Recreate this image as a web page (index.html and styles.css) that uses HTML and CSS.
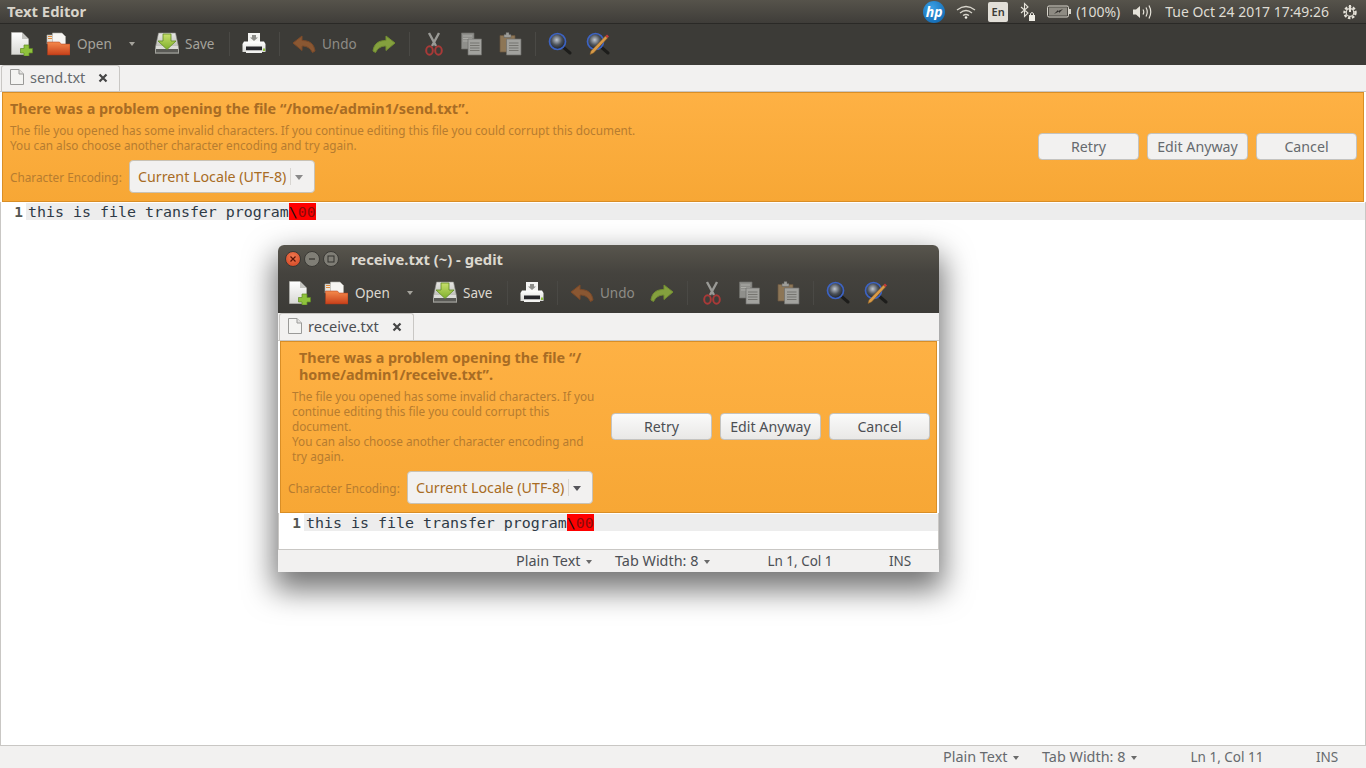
FILE: index.html
```html
<!DOCTYPE html>
<html lang="en">
<head>
<meta charset="utf-8">
<title>Text Editor</title>
<link rel="stylesheet" href="styles.css">
</head>
<body>
<svg class="defs" aria-hidden="true">
  <defs>
    <linearGradient id="g-page" x1="0" y1="0" x2="0" y2="1"><stop offset="0" stop-color="#ffffff"/><stop offset="1" stop-color="#d8d8d4"/></linearGradient>
    <linearGradient id="g-folder" x1="0" y1="0" x2="0" y2="1"><stop offset="0" stop-color="#f58a4c"/><stop offset="1" stop-color="#c8401a"/></linearGradient>
    <linearGradient id="g-drive" x1="0" y1="0" x2="0" y2="1"><stop offset="0" stop-color="#e8e8e4"/><stop offset="1" stop-color="#a8a8a2"/></linearGradient>
    <linearGradient id="g-green" x1="0" y1="0" x2="0" y2="1"><stop offset="0" stop-color="#c8e06c"/><stop offset="1" stop-color="#7fb02c"/></linearGradient>
    <radialGradient id="g-glass" cx=".45" cy=".4" r=".6"><stop offset="0" stop-color="#c0c6ce"/><stop offset=".55" stop-color="#4a5058"/><stop offset="1" stop-color="#1c2028"/></radialGradient>
    <symbol id="i-new" viewBox="0 0 24 24">
      <path d="M2.5 .5H13L19.5 7V22.5H2.5Z" fill="url(#g-page)" stroke="#b8b8b4" stroke-width=".6"/>
      <path d="M13 .5V7H19.5Z" fill="#c4c4c0"/>
      <path d="M15 13H20V16.5H23.5V21H20V24H15V21H11.5V16.5H15Z" fill="#8fc23c" stroke="#5f8a22" stroke-width=".7"/>
    </symbol>
    <symbol id="i-open" viewBox="0 0 24 24">
      <path d="M1 3H12V12H1Z" fill="#e8e6e0" stroke="#b0aea8" stroke-width=".6"/>
      <path d="M6.5 1H16L19.5 4.500V14H6.500Z" fill="#f6f5f2" stroke="#b0aea8" stroke-width=".6"/>
      <path d="M2 4.500H6M2 6.500H6" stroke="#e08a3a" stroke-width="1"/>
      <path d="M1.500 10H13.500L15 12H24V23H1.500Z" fill="url(#g-folder)" stroke="#a8381a" stroke-width=".5"/>
    </symbol>
    <symbol id="i-save" viewBox="0 0 24 24">
      <path d="M3.500 1H20.500L24 17V21.500H0V17Z" fill="url(#g-drive)" stroke="#8a8a84" stroke-width=".6"/>
      <path d="M1 16H23V20.500H1Z" fill="#5a5a56"/>
      <path d="M1 14H23V17H1Z" fill="#dcdcd8"/>
      <path d="M8 2H16V9H21L12 17.500L3 9H8Z" fill="url(#g-green)" stroke="#5f8a22" stroke-width=".8"/>
    </symbol>
    <symbol id="i-print" viewBox="0 0 24 24">
      <path d="M6 1H18V10H6Z" fill="#f4f4f2"/>
      <path d="M10 3H14V5.500H16L12 9L8 5.500H10Z" fill="#8e8e8a"/>
      <path d="M2 9.500H22L23.500 12V20H.5V12Z" fill="url(#g-page)"/>
      <path d="M4 14.500H20V18.500H4Z" fill="#26262a"/>
      <path d="M4 18.500H20V21H4Z" fill="#f2f2f0"/>
      <path d="M21 16.500H23V19H21Z" fill="#8fc23c"/>
    </symbol>
    <symbol id="i-undo" viewBox="0 0 24 24">
      <path d="M10 4L1 11L10 18.500V14C15 14 18 16 20.500 20.500L23 19C22 12 18 8.500 10 8.500Z" fill="#8a5732" stroke="#7c4a28" stroke-width="1" stroke-linejoin="round"/>
    </symbol>
    <symbol id="i-redo" viewBox="0 0 24 24">
      <path d="M14 4L23 11L14 18.500V14C9 14 6 16 3.500 20.500L1 19C2 12 6 8.500 14 8.500Z" fill="#84a03e" stroke="#728e30" stroke-width="1" stroke-linejoin="round"/>
    </symbol>
    <symbol id="i-cut" viewBox="0 0 24 24">
      <path d="M7 1L14 14M17 1L10 14" stroke="#9a9a96" stroke-width="2.400" fill="none"/>
      <ellipse cx="7.500" cy="18.500" rx="3.300" ry="4.200" fill="none" stroke="#a83a38" stroke-width="2"/>
      <ellipse cx="16.500" cy="18.500" rx="3.300" ry="4.200" fill="none" stroke="#a83a38" stroke-width="2"/>
    </symbol>
    <symbol id="i-copy" viewBox="0 0 24 24">
      <path d="M2.500 1H15V17H2.500Z" fill="#8f8f8b" stroke="#6e6e6a" stroke-width=".7"/>
      <path d="M4 4H13M4 6.500H13M4 9H13" stroke="#b0b0ac" stroke-width=".9"/>
      <path d="M9 7H22.500V23H9Z" fill="#a2a29e" stroke="#6e6e6a" stroke-width=".7"/>
      <path d="M11 11H20.500M11 13.500H20.500M11 16H20.500M11 18.500H20.500" stroke="#706f6b" stroke-width=".9"/>
    </symbol>
    <symbol id="i-paste" viewBox="0 0 24 24">
      <path d="M2 3.500H17V20H2Z" fill="#8d7656" stroke="#6a5840" stroke-width=".7"/>
      <path d="M6 2.500H8V.5H11V2.500H13V5.500H6Z" fill="#9d9d99" stroke="#5f5f5b" stroke-width=".5"/>
      <path d="M8.500 7H23V23H8.500Z" fill="#a2a29e" stroke="#6e6e6a" stroke-width=".7"/>
      <path d="M11 11H20.500M11 13.500H20.500M11 16H20.500M11 18.500H20.500" stroke="#706f6b" stroke-width=".9"/>
    </symbol>
    <symbol id="i-find" viewBox="0 0 24 24">
      <path d="M15 15L22 21" stroke="#1d1d1b" stroke-width="3" stroke-linecap="round"/>
      <circle cx="9.500" cy="9.500" r="8" fill="url(#g-glass)" stroke="#3d63c2" stroke-width="1.700"/>
    </symbol>
    <symbol id="i-replace" viewBox="0 0 24 24">
      <path d="M15 15L22 21" stroke="#1d1d1b" stroke-width="3" stroke-linecap="round"/>
      <circle cx="9.500" cy="9.500" r="8" fill="url(#g-glass)" stroke="#3d63c2" stroke-width="1.700"/>
      <path d="M19.500 4L21.500 6L7.500 21L4 22.500L5 19Z" fill="#d89a48" stroke="#8a5e24" stroke-width=".5"/>
      <path d="M19.500 4L21 2.500L23 4.500L21.500 6Z" fill="#c83a38"/>
    </symbol>
    <symbol id="i-doc" viewBox="0 0 16 16">
      <path d="M1.500 .5H10L14.500 5V15.500H1.500Z" fill="#f4f4f2" stroke="#9a9a98"/>
      <path d="M10 .5V5H14.500" fill="#e4e4e2" stroke="#9a9a98"/>
    </symbol>
    <symbol id="i-close" viewBox="0 0 10 10">
      <path d="M1.500 1.500L8.500 8.500M8.500 1.500L1.500 8.500" stroke="#454545" stroke-width="2.200"/>
    </symbol>
  </defs>
</svg>

<main class="win main-win">
  <header class="panel">
    <span class="panel-title">Text Editor</span>
    <div class="indicators">
      <span class="hp">hp</span>
      <svg class="ind-wifi" width="20" height="14" viewBox="0 0 20 14"><path d="M1 5Q10 -2 19 5M4 8Q10 3 16 8M7 10.500Q10 8.500 13 10.500" fill="none" stroke="#d8d5cc" stroke-width="1.300"/><circle cx="10" cy="12.500" r="1.300" fill="#f0eee6"/></svg>
      <span class="lang">En</span>
      <svg class="ind-bt" width="16" height="20" viewBox="0 0 16 20"><path d="M1 5L8 11L4.500 14.500V1.500L8 5L1 11" fill="none" stroke="#e6e3da" stroke-width="1.100"/><path d="M9 13H15V19H9Z" fill="#f0eee6"/><path d="M10.500 13V11.500Q12 9.500 13.500 11.500V13" fill="none" stroke="#f0eee6"/></svg>
      <svg class="ind-bat" width="24" height="13" viewBox="0 0 24 13"><rect x=".5" y="1" width="21" height="11" rx="1.500" fill="none" stroke="#d8d5cc"/><rect x="2" y="2.500" width="18" height="8" fill="#8e8b83"/><rect x="22" y="4" width="2" height="5" fill="#d8d5cc"/><path d="M7 9L12 6.500V8L16 4L11 6V5Z" fill="#2e2d2a"/></svg>
      <span class="bat-text">(100%)</span>
      <svg class="ind-vol" width="21" height="16" viewBox="0 0 21 16"><path d="M1 5.500H4L8 2V14L4 10.500H1Z" fill="#e6e3da"/><path d="M11 5.500Q12.500 8 11 10.500M14 3.500Q16.500 8 14 12.500M17 1.500Q20.500 8 17 14.500" fill="none" stroke="#e6e3da" stroke-width="1.200"/></svg>
      <span class="clock">Tue Oct 24 2017 17:49:26</span>
      <svg class="ind-pow" width="16" height="16" viewBox="0 0 16 16"><circle cx="8" cy="8.500" r="5.500" fill="none" stroke="#e6e3da" stroke-width="2.400" stroke-dasharray="2.500 1.500"/><circle cx="8" cy="8.500" r="3.800" fill="none" stroke="#e6e3da" stroke-width="1.200"/><path d="M8 1V8" stroke="#e6e3da" stroke-width="2"/></svg>
    </div>
  </header>

  <div class="toolbar">
    <svg class="icon t-new"><use href="#i-new"/></svg>
    <svg class="icon t-open"><use href="#i-open"/></svg>
    <span class="tlabel l-open">Open</span>
    <span class="tarrow"></span>
    <svg class="icon t-save"><use href="#i-save"/></svg>
    <span class="tlabel l-save">Save</span>
    <span class="sep s-1"></span>
    <svg class="icon t-gap"><use href="#i-print"/></svg>
    <span class="sep s-2"></span>
    <svg class="icon t-gap"><use href="#i-undo"/></svg>
    <span class="tlabel dim l-undo">Undo</span>
    <svg class="icon t-redo"><use href="#i-redo"/></svg>
    <span class="sep s-2"></span>
    <svg class="icon t-gap"><use href="#i-cut"/></svg>
    <svg class="icon t-gap"><use href="#i-copy"/></svg>
    <svg class="icon t-paste"><use href="#i-paste"/></svg>
    <span class="sep s-2"></span>
    <svg class="icon t-gap"><use href="#i-find"/></svg>
    <svg class="icon t-replace"><use href="#i-replace"/></svg>
  </div>

  <div class="tabbar">
    <div class="tab tab-send">
      <svg class="tab-doc"><use href="#i-doc"/></svg>
      <span class="tab-name">send.txt</span>
      <svg class="tab-x"><use href="#i-close"/></svg>
    </div>
  </div>

  <section class="info info-wide">
    <div class="info-left">
      <h2 class="info-title">There was a problem opening the file “/home/admin1/send.txt”.</h2>
      <p class="info-body">The file you opened has some invalid characters. If you continue editing this file you could corrupt this document.<br>You can also choose another character encoding and try again.</p>
      <div class="enc">
        <span class="enc-label">Character Encoding:</span>
        <div class="combo"><span class="combo-text">Current Locale (UTF-8)</span><span class="combo-arrow"></span></div>
      </div>
    </div>
    <div class="info-btns">
      <button class="btn" type="button">Retry</button>
      <button class="btn" type="button">Edit Anyway</button>
      <button class="btn" type="button">Cancel</button>
    </div>
  </section>

  <div class="editor">
    <div class="line"><span class="gutter">1</span><code class="code">this is file transfer program<span class="bad"><span class="bs">\</span>00</span></code></div>
  </div>

  <footer class="status">
    <span class="st st-plain">Plain Text<i class="st-arrow"></i></span>
    <span class="st st-tab">Tab Width: 8<i class="st-arrow"></i></span>
    <span class="st st-pos">Ln 1, Col 11</span>
    <span class="st st-ins">INS</span>
  </footer>
</main>

<article class="win float-win">
  <header class="titlebar">
    <span class="wbtn w-close"><svg width="8" height="8" viewBox="0 0 8 8"><path d="M1.500 1.500L6.500 6.500M6.500 1.500L1.500 6.500" stroke="#5a1408" stroke-width="1.200"/></svg></span>
    <span class="wbtn w-min"><svg width="8" height="8" viewBox="0 0 8 8"><path d="M1 4H7" stroke="#33322e" stroke-width="1.200"/></svg></span>
    <span class="wbtn w-max"><svg width="8" height="8" viewBox="0 0 8 8"><rect x="1" y="1" width="6" height="6" fill="none" stroke="#33322e"/></svg></span>
    <span class="win-title">receive.txt (~) - gedit</span>
  </header>

  <div class="toolbar">
    <svg class="icon t-new"><use href="#i-new"/></svg>
    <svg class="icon t-open"><use href="#i-open"/></svg>
    <span class="tlabel l-open">Open</span>
    <span class="tarrow"></span>
    <svg class="icon t-save"><use href="#i-save"/></svg>
    <span class="tlabel l-save">Save</span>
    <span class="sep s-1"></span>
    <svg class="icon t-gap"><use href="#i-print"/></svg>
    <span class="sep s-2"></span>
    <svg class="icon t-gap"><use href="#i-undo"/></svg>
    <span class="tlabel dim l-undo">Undo</span>
    <svg class="icon t-redo"><use href="#i-redo"/></svg>
    <span class="sep s-2"></span>
    <svg class="icon t-gap"><use href="#i-cut"/></svg>
    <svg class="icon t-gap"><use href="#i-copy"/></svg>
    <svg class="icon t-paste"><use href="#i-paste"/></svg>
    <span class="sep s-2"></span>
    <svg class="icon t-gap"><use href="#i-find"/></svg>
    <svg class="icon t-replace"><use href="#i-replace"/></svg>
  </div>

  <div class="tabbar">
    <div class="tab tab-receive">
      <svg class="tab-doc"><use href="#i-doc"/></svg>
      <span class="tab-name">receive.txt</span>
      <svg class="tab-x"><use href="#i-close"/></svg>
    </div>
  </div>

  <section class="info info-narrow">
    <div class="info-left">
      <h2 class="info-title">There was a problem opening the file “/<br>home/admin1/receive.txt”.</h2>
      <p class="info-body">The file you opened has some invalid characters. If you<br>continue editing this file you could corrupt this<br>document.<br>You can also choose another character encoding and<br>try again.</p>
      <div class="enc">
        <span class="enc-label">Character Encoding:</span>
        <div class="combo"><span class="combo-text">Current Locale (UTF-8)</span><span class="combo-arrow"></span></div>
      </div>
    </div>
    <div class="info-btns">
      <button class="btn" type="button">Retry</button>
      <button class="btn" type="button">Edit Anyway</button>
      <button class="btn" type="button">Cancel</button>
    </div>
  </section>

  <div class="editor">
    <div class="line"><span class="gutter">1</span><code class="code">this is file transfer program<span class="bad"><span class="bs">\</span>00</span></code></div>
  </div>

  <footer class="status">
    <span class="st st-plain">Plain Text<i class="st-arrow"></i></span>
    <span class="st st-tab">Tab Width: 8<i class="st-arrow"></i></span>
    <span class="st st-pos">Ln 1, Col 1</span>
    <span class="st st-ins">INS</span>
  </footer>
</article>
</body>
</html>
```
FILE: styles.css
```css
* { box-sizing: border-box; }
html, body { margin: 0; padding: 0; }
body {
  position: relative;
  width: 1366px;
  height: 768px;
  overflow: hidden;
  background: #fff;
  font-family: "Noto Sans", "Open Sans", sans-serif;
  font-size: 13.5px;
}
.defs { position: absolute; width: 0; height: 0; }

/* Windows */
.win { display: flex; flex-direction: column; background: #fff; }
.main-win { width: 1366px; height: 768px; --tb-text: #a5a39c; --tx: #666a6e; --btn-top: #f2f1f0; --btn-bot: #f2f1f0; --arrow: #8a8a8a; --info-title: #a86c24; --info-body: #b67c30; }
.float-win {
  position: absolute;
  left: 278px;
  top: 245px;
  width: 661px;
  height: 327px;
  border-radius: 6px 6px 0 0;
  box-shadow: 0 14px 30px 4px rgba(0, 0, 0, .55);
  --tb-text: #dcd8cf;
  --tx: #4c4f54;
  --btn-top: #fafafa;
  --btn-bot: #e9e8e6;
  --arrow: #55555a;
  --info-title: #a86c24;
  --info-body: #b67c30;
}

/* Top panel */
.panel {
  height: 24px;
  flex: none;
  display: flex;
  align-items: center;
  padding-left: 7px;
  background: linear-gradient(#56534b, #3f3d39);
  border-bottom: 1px solid #2a2926;
}
.panel-title { font-weight: 700; font-size: 14.8px; color: #d8d4ca; padding-bottom: 2px; }
.indicators { margin-left: auto; display: flex; align-items: center; color: #dfdcd4; font-size: 14px; padding-right: 8px; }
.hp {
  width: 22px; height: 22px; border-radius: 50%;
  background: radial-gradient(circle at 40% 30%, #3aa0e4, #0a5ea8);
  color: #fff; font-style: italic; font-weight: 700; font-size: 14px; line-height: 21px; text-align: center;
}
.ind-wifi { margin-left: 11px; }
.lang {
  margin-left: 12px; width: 20px; height: 20px; border-radius: 2px;
  background: #e2dfd8; color: #3c3b37; font-size: 11px; font-weight: 600; line-height: 20px; text-align: center;
}
.ind-bt { margin-left: 12px; }
.ind-bat { margin-left: 11px; }
.bat-text { margin-left: 5px; }
.ind-vol { margin-left: 12px; }
.clock { margin-left: 12px; font-size: 13.95px; }
.ind-pow { margin-left: 13px; }

/* Toolbar */
.toolbar {
  height: 41px;
  flex: none;
  display: flex;
  align-items: center;
  padding: 0 0 1px 9px;
  background: #3c3b37;
  color: var(--tb-text);
  font-size: 13.5px;
}
.float-win .toolbar { height: 40px; padding-bottom: 0; background: linear-gradient(#45433e, #3c3b37); }
.icon { width: 24px; height: 24px; flex: none; }
.t-open { margin-left: 13px; }
.tlabel { flex: none; }
.l-open { margin-left: 7px; width: 52px; }
.tarrow { width: 0; height: 0; flex: none; border: 3.500px solid transparent; border-top: 4px solid #a5a39c; border-bottom: 0; margin-right: 20px; }
.l-save { margin-left: 6px; width: 44px; }
.sep { width: 1px; height: 24px; flex: none; background: #4a4945; }
.s-1 { margin-right: 12px; }
.s-2 { margin-left: 13px; margin-right: 12px; }
.t-gap + .t-gap { margin-left: 13px; }
.t-paste { margin-left: 15px; }
.t-replace { margin-left: 14px; }
.dim { color: #8e8c86; }
.l-undo { margin-left: 6px; width: 50px; }

/* Tabs */
.tabbar {
  height: 27px;
  flex: none;
  padding-left: 1px;
  display: flex;
  background: #f2f1f0;
  border-bottom: 1px solid #c9c7c4;
}
.float-win .tabbar { height: 28px; }
.tab {
  display: flex;
  align-items: center;
  height: 26px;
  background: #f2f1f0;
  border: 1px solid #c9c7c4;
  border-bottom: 0;
  border-radius: 3px 3px 0 0;
  padding-left: 7px;
  color: var(--tx);
  font-size: 14.6px;
  position: relative;
}
.float-win .tab { height: 27px; margin-bottom: -1px; padding-bottom: 2px; }
.tab-send { width: 119px; height: 26px; margin-bottom: -1px; padding-bottom: 3px; }
.tab-receive { width: 135px; }
.tab-doc { width: 16px; height: 16px; flex: none; }
.tab-name { margin-left: 5px; }
.tab-x { width: 10px; height: 10px; position: absolute; right: 11px; top: 7px; }
.float-win .tab-x { top: 8px; }

/* Info bar */
.info {
  flex: none;
  display: flex;
  align-items: flex-start;
  justify-content: space-between;
  margin: 0 2px;
  padding: 0 6px 0 7px;
  background: linear-gradient(#feb144, #f7a735);
  border: 1px solid #d98e26;
  color: var(--info-body);
}
.info-wide { height: 110px; }
.info-narrow { height: 172px; }
.info-left { display: flex; flex-direction: column; white-space: nowrap; padding-top: 7px; }
.info-title { margin: 0; font-size: 14.4px; line-height: 17px; font-weight: 700; color: var(--info-title); }
.info-body { margin: 6px 0 0; font-size: 11.75px; line-height: 15px; }
.enc { display: flex; align-items: center; margin-top: 7px; font-size: 11.8px; }
.info-narrow .info-title { margin-left: 11px; }
.info-narrow .info-body { margin-left: 4px; }
.enc-label { width: 119px; flex: none; }
.combo {
  width: 186px;
  height: 33px;
  display: flex;
  align-items: center;
  padding-left: 8px;
  background: #f2f1f0;
  border: 1px solid #c9c2b4;
  border-radius: 4px;
  color: #a86c24;
  font-size: 14.25px;
}
.combo-text { flex: 1; white-space: nowrap; }
.combo-arrow {
  width: 24px;
  height: 17px;
  flex: none;
  border-left: 1px solid #d8d6d2;
  position: relative;
}
.combo-arrow::after {
  content: "";
  position: absolute;
  left: 4px;
  top: 7px;
  border: 4px solid transparent;
  border-top: 5px solid var(--arrow);
  border-bottom: 0;
}
.info-btns { display: flex; gap: 8px; flex: none; }
.info-wide .info-btns { margin-top: 40px; }
.info-narrow .info-btns { margin-top: 71px; }
.btn {
  width: 101px;
  height: 27px;
  padding: 0;
  border: 1px solid #c4c3c0;
  border-radius: 4px;
  background: linear-gradient(var(--btn-top), var(--btn-bot));
  color: var(--tx);
  font-family: inherit;
  font-size: 14.2px;
}

/* Editor */
.editor { flex: 1; min-height: 0; border-left: 1px solid #c9c7c4; border-right: 1px solid #c9c7c4; background: #fff; padding-top: 1px; }
.line { display: flex; height: 17px; align-items: stretch; overflow: hidden; }
.gutter { width: 25px; flex: none; padding: 1px 3px 0 0; text-align: right; font: 700 14.5px/17px "DejaVu Sans Mono", monospace; color: #555753; }
.code { flex: 1; padding: 1px 0 0 2px; background: #ededed; font: 14.95px/17px "DejaVu Sans Mono", monospace; color: #2e3a46; white-space: pre; }
.bad { background: #ff0000; color: #8c0a0a; padding-top: 2px; }
.bs { color: #1a1010; }

/* Status */
.status {
  height: 23px;
  flex: none;
  display: flex;
  align-items: center;
  justify-content: flex-end;
  background: #f2f1f0;
  border-top: 1px solid #c9c7c4;
  color: var(--tx);
  font-size: 13.5px;
}
.st { display: block; flex: none; white-space: nowrap; }
.st-plain { width: 99px; font-size: 14.4px; padding-bottom: 2px; }
.st-tab { width: 125px; font-size: 14.4px; padding-bottom: 2px; }
.st-pos { width: 120px; text-align: center; }
.st-ins { width: 79px; padding-left: 29px; }
.st-arrow {
  display: inline-block;
  margin-left: 6px;
  vertical-align: 2px;
  border: 3px solid transparent;
  border-top: 4px solid #6a6a6a;
  border-bottom: 0;
}

/* Title bar */
.titlebar {
  height: 28px;
  flex: none;
  display: flex;
  align-items: center;
  padding-left: 7px;
  border-radius: 6px 6px 0 0;
  background: linear-gradient(#58554d, #45433e);
}
.wbtn {
  width: 16px;
  height: 16px;
  border-radius: 50%;
  margin-right: 3px;
  display: flex;
  align-items: center;
  justify-content: center;
  flex: none;
  background: #807e76;
  border: 1px solid #3a3935;
}
.w-close { background: radial-gradient(circle at 50% 35%, #f27b52, #d0401e); }
.win-title { margin-left: 9px; font-weight: 700; font-size: 14.8px; color: #dcd8cf; }
```
